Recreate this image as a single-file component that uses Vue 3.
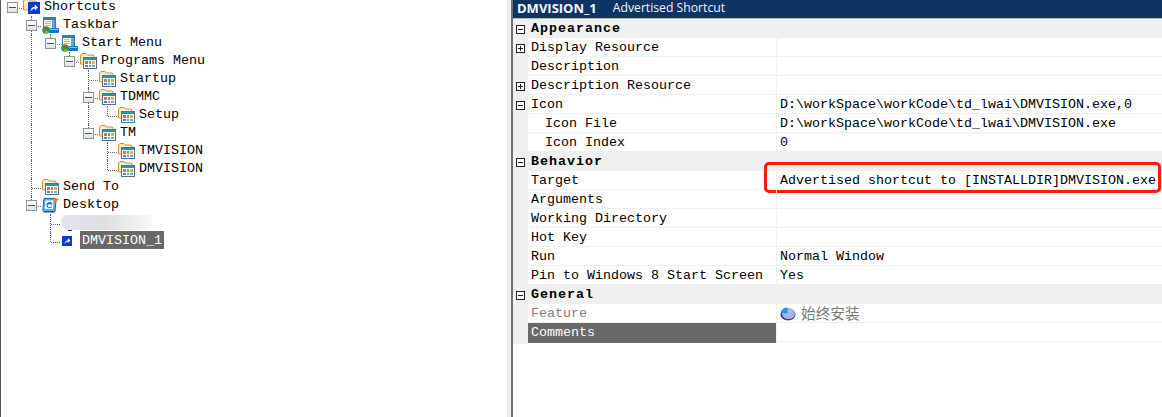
<script setup>
const treeRows = [
  { label: 'Shortcuts', depth: 0, guides: [], box: true, last: true, icon: 'root' },
  { label: 'Taskbar', depth: 1, guides: [], box: true, last: false, icon: 'taskbar' },
  { label: 'Start Menu', depth: 2, guides: [1], box: true, last: true, icon: 'taskbar' },
  { label: 'Programs Menu', depth: 3, guides: [1], box: true, last: true, icon: 'folder' },
  { label: 'Startup', depth: 4, guides: [1], box: false, last: false, icon: 'folder' },
  { label: 'TDMMC', depth: 4, guides: [1], box: true, last: false, icon: 'folder' },
  { label: 'Setup', depth: 5, guides: [1, 4], box: false, last: true, icon: 'folder' },
  { label: 'TM', depth: 4, guides: [1], box: true, last: true, icon: 'folder' },
  { label: 'TMVISION', depth: 5, guides: [1], box: false, last: false, icon: 'folder' },
  { label: 'DMVISION', depth: 5, guides: [1], box: false, last: true, icon: 'folder' },
  { label: 'Send To', depth: 1, guides: [], box: false, last: false, icon: 'folder' },
  { label: 'Desktop', depth: 1, guides: [], box: true, last: true, icon: 'desktop' },
  { label: '', depth: 2, guides: [], box: false, last: false, icon: 'blur' },
  { label: 'DMVISION_1', depth: 2, guides: [], box: false, last: true, icon: 'shortcut', selected: true }
]

const propRows = [
  { name: 'Appearance', section: true, toggle: 'minus' },
  { name: 'Display Resource', toggle: 'plus' },
  { name: 'Description' },
  { name: 'Description Resource', toggle: 'plus' },
  { name: 'Icon', toggle: 'minus', value: 'D:\\workSpace\\workCode\\td_lwai\\DMVISION.exe,0' },
  { name: 'Icon File', child: true, value: 'D:\\workSpace\\workCode\\td_lwai\\DMVISION.exe' },
  { name: 'Icon Index', child: true, value: '0' },
  { name: 'Behavior', section: true, toggle: 'minus' },
  { name: 'Target', value: 'Advertised shortcut to [INSTALLDIR]DMVISION.exe', marked: true },
  { name: 'Arguments' },
  { name: 'Working Directory' },
  { name: 'Hot Key' },
  { name: 'Run', value: 'Normal Window' },
  { name: 'Pin to Windows 8 Start Screen', value: 'Yes' },
  { name: 'General', section: true, toggle: 'minus' },
  { name: 'Feature', muted: true, feature: '始终安装' },
  { name: 'Comments', selected: true }
]

const range = (n) => Array.from({ length: n }, (_, i) => i)
</script>

<template>
  <div class="window">
    <div class="tree-pane">
      <div class="tree">
        <div v-for="row in treeRows" :key="row.label + row.depth" class="tree-row">
          <span
            v-for="k in range(row.depth)"
            :key="k"
            class="cell"
            :class="{ through: row.guides.includes(k) }"
          ></span>
          <span class="cell joint" :class="{ nested: row.depth > 0, open: !row.last && row.depth > 0 }">
            <span v-if="row.box" class="exp"><span class="exp-bar"></span></span>
          </span>

          <div v-if="row.icon === 'blur'" class="smear"><span class="smear-tail"></span></div>
          <template v-else>
            <span class="icon-cell">
              <svg v-if="row.icon === 'folder' || row.icon === 'root'" class="ico" width="17" height="16" viewBox="0 0 17 16">
                <path d="M0.500 11V2L2 0.500h4L7.500 2H13l1 1v8z" fill="#fde7ad" stroke="#c8944a" />
                <path d="M1.500 3.500h11" stroke="#fff8de" />
                <template v-if="row.icon === 'folder'">
                  <rect x="3.500" y="4.500" width="13" height="11" fill="#fff" stroke="#54707f" />
                  <rect x="4" y="5" width="12" height="2" fill="#1f9bb0" />
                  <rect x="5" y="8" width="3" height="3" fill="#f0604e" />
                  <rect x="9" y="8" width="2" height="3" fill="#48b858" />
                  <rect x="12" y="8" width="3" height="3" fill="#f2a93c" />
                  <rect x="5" y="12" width="3" height="2" fill="#3f86e0" />
                  <rect x="9" y="12" width="2" height="2" fill="#e070b8" />
                  <rect x="12" y="12" width="3" height="2" fill="#45c0cc" />
                </template>
                <template v-else>
                  <rect x="5" y="3" width="12" height="12" fill="#0a3cc8" />
                  <path d="M7.500 12.500c.3-3 1.800-4.600 4.500-5V5.500l3 3-3 3V9.500c-2 .2-3.300 1.200-4.500 3z" fill="#fff" />
                </template>
              </svg>
              <svg v-else-if="row.icon === 'taskbar'" class="ico" width="17" height="17" viewBox="0 0 17 17">
                <rect x="1.500" y="0.500" width="12" height="12" fill="#fdf8dc" stroke="#3a78b4" />
                <rect x="2" y="1" width="11" height="2" fill="#2f7cc4" />
                <rect x="3" y="4" width="6" height="1" fill="#e6c050" />
                <rect x="3" y="6" width="6" height="1" fill="#8cbcdc" />
                <rect x="3" y="8" width="6" height="1" fill="#e6c050" />
                <rect x="10" y="3" width="3" height="8" fill="#5aa8e0" />
                <rect x="7" y="11" width="10" height="5" rx="1" fill="#1478c8" />
                <rect x="8" y="12" width="8" height="1" fill="#78c8f4" />
                <circle cx="4" cy="13" r="3.800" fill="#2f9a48" />
                <path d="M2.500 11h3v2h-3z" fill="#d84030" />
                <circle cx="4.500" cy="15" r="1.100" fill="#e8b030" />
              </svg>
              <svg v-else-if="row.icon === 'desktop'" class="ico" width="17" height="16" viewBox="0 0 17 16">
                <path d="M2 1.500h11l1 1.500-1 11.500H1.500L.8 13z" fill="#58b4ee" stroke="#1868b8" />
                <path d="M3.500 3.500h8l-.5 8.500h-8z" fill="#fbfdff" />
                <path d="M9.800 9.500a2.600 2.600 0 1 1 .1-2.500H5" fill="none" stroke="#1a70c8" stroke-width="1.200" />
                <path d="M11.500 4.500l3.500-3.500 1.500 1.500-3.500 3.500z" fill="#f07a28" />
                <path d="M1.500 15h11" stroke="#0f4c94" />
              </svg>
              <svg v-else class="ico small" width="10" height="10" viewBox="0 0 12 12">
                <rect x="0" y="0" width="12" height="12" fill="#0a3cc8" />
                <path d="M3 10c.3-3 1.700-4.600 4-5V2.500l3 3-3 3V6.600C5.400 6.800 4 7.900 3 10z" fill="#fff" />
              </svg>
            </span>
            <span class="tree-label" :class="{ picked: row.selected }">{{ row.label }}</span>
          </template>
        </div>
      </div>
    </div>

    <div class="splitter"></div>

    <div class="props">
      <div class="props-head">
        <strong class="head-name">DMVISION_1</strong>
        <span class="head-kind">Advertised Shortcut</span>
      </div>
      <div class="prop-list">
        <div v-for="row in propRows" :key="row.name" class="prop" :class="{ section: row.section }">
          <span class="gutter">
            <svg v-if="row.toggle" width="9" height="9" viewBox="0 0 9 9">
              <rect x="0.500" y="0.500" width="8" height="8" fill="#fff" stroke="#222" />
              <path d="M2 4.500h5" stroke="#222" />
              <path v-if="row.toggle === 'plus'" d="M4.500 2v5" stroke="#222" />
            </svg>
          </span>
          <span
            class="prop-name"
            :class="{ child: row.child, muted: row.muted, chosen: row.selected }"
          >{{ row.name }}</span>
          <span class="prop-value">
            <template v-if="row.feature">
              <svg class="pie" width="16" height="15" viewBox="0 0 16 15">
                <ellipse cx="8" cy="8.500" rx="7.500" ry="6" fill="#2b3f9e" />
                <ellipse cx="8.500" cy="7.500" rx="6.500" ry="5.500" fill="#a8b4ec" />
                <path d="M7.500 1.500C4 1.500 1 3.500 .8 7.200h6.700z" fill="#2f8fdc" />
              </svg>
              <span class="feature-name">{{ row.feature }}</span>
            </template>
            <template v-else>{{ row.value }}</template>
            <span v-if="row.marked" class="callout"></span>
          </span>
        </div>
      </div>
    </div>
  </div>
</template>

<style>
html, body { margin: 0; padding: 0; background: #fff; overflow: hidden; }
</style>

<style scoped>
.window {
  display: flex;
  height: 417px;
  width: 1162px;
  overflow: hidden;
  background: #fff;
  color: #000;
  font-family: "Liberation Mono", "DejaVu Sans Mono", monospace;
  font-size: 13.33px;
}
.tree-pane {
  width: 506px;
  flex: none;
  border-left: 1px solid #555;
  overflow: hidden;
}
.tree {
  margin-top: -2px;
  padding-left: 2px;
}
.tree-row {
  display: flex;
  height: 18px;
  align-items: flex-start;
}
.cell {
  position: relative;
  flex: none;
  width: 19px;
  height: 18px;
}
.cell.through::before {
  content: "";
  position: absolute;
  left: 9px;
  top: 0;
  bottom: 0;
  border-left: 1px dotted #666;
}
.joint::after {
  content: "";
  position: absolute;
  left: 10px;
  width: 9px;
  top: 10px;
  border-top: 1px dotted #666;
}
.joint.nested::before {
  content: "";
  position: absolute;
  left: 9px;
  top: 0;
  height: 10px;
  border-left: 1px dotted #666;
}
.joint.open::before {
  height: 18px;
}
.exp {
  position: absolute;
  z-index: 1;
  left: 4px;
  top: 4px;
  box-sizing: border-box;
  width: 11px;
  height: 11px;
  border: 1px solid #8f9499;
  background: linear-gradient(#fff, #dfe2e6);
  display: flex;
  align-items: center;
  justify-content: center;
}
.exp-bar {
  width: 7px;
  height: 1px;
  background: #3a4f8f;
}
.icon-cell {
  flex: none;
  width: 20px;
  height: 18px;
  position: relative;
}
.ico {
  display: block;
  margin: 1px 0 0 1px;
  overflow: visible;
}
.ico.small {
  margin: 4px 0 0 2px;
}
.tree-label {
  padding: 0 2px;
  height: 18px;
  line-height: 18px;
  white-space: nowrap;
}
.tree-label.picked {
  margin-top: -1px;
  line-height: 20px;
  background: #696969;
  color: #fff;
}
.smear {
  position: relative;
  flex: none;
  width: 91px;
  height: 15px;
  margin: 1px 0 0 1px;
  background: linear-gradient(90deg, #e3e4f1 0, #e2dfec 30%, #dedede 48%, #e9e9e9 68%, #f2f2f2 88%, #fafafa 100%);
  border-radius: 6px 2px 6px 8px;
}
.smear-tail {
  position: absolute;
  left: 7px;
  top: 15px;
  width: 4px;
  height: 1px;
  background: #222;
}
.splitter {
  flex: none;
  box-sizing: border-box;
  width: 6px;
  background: #f0f0f0;
  border-left: 1px solid #e2e2e2;
  border-right: 2px solid #6f6f6f;
}
.props {
  flex: 1;
  min-width: 0;
}
.props-head {
  display: flex;
  align-items: center;
  height: 18px;
  box-sizing: content-box;
  padding-left: 4px;
  gap: 16px;
  background: #0e3466;
  color: #f2f6fa;
  font-family: "Open Sans", "Liberation Sans", sans-serif;
  font-size: 12.2px;
  line-height: 14px;
  border-bottom: 1px solid #b8b8b8;
}
.head-name,
.head-kind {
  margin-top: -3px;
}
.head-name {
  font-weight: 700;
  font-size: 13px;
}
.prop {
  display: grid;
  grid-template-columns: 15px 248px 1fr;
  height: 19px;
  box-sizing: border-box;
  line-height: 20px;
  border-bottom: 1px solid #f0f0f0;
}
.gutter {
  background: #f0f0f0;
  display: flex;
  align-items: center;
  padding-left: 3px;
  margin-bottom: -1px;
}
.prop-name {
  padding-left: 3px;
  white-space: nowrap;
}
.prop-name.child {
  padding-left: 17px;
}
.prop-name.muted {
  color: #808080;
}
.prop-name.chosen {
  background: #696969;
  color: #fff;
}
.prop-value {
  position: relative;
  display: flex;
  align-items: flex-start;
  padding-left: 3px;
  border-left: 1px solid #f0f0f0;
  white-space: nowrap;
}
.section {
  background: #f0f0f0;
}
.section .prop-name {
  font-weight: 700;
  letter-spacing: 1px;
}
.section .prop-value {
  border-left-color: transparent;
}
.pie {
  flex: none;
  margin: 2px 5px 0 0;
}
.feature-name {
  font-family: "Noto Sans CJK SC", sans-serif;
  font-size: 14.67px;
  line-height: 18px;
  color: #7a7a7a;
}
.callout {
  position: absolute;
  left: -13px;
  top: -9px;
  width: 397px;
  height: 31px;
  box-sizing: border-box;
  border: 3px solid #fb1a0c;
  border-radius: 5px;
  pointer-events: none;
}
</style>
